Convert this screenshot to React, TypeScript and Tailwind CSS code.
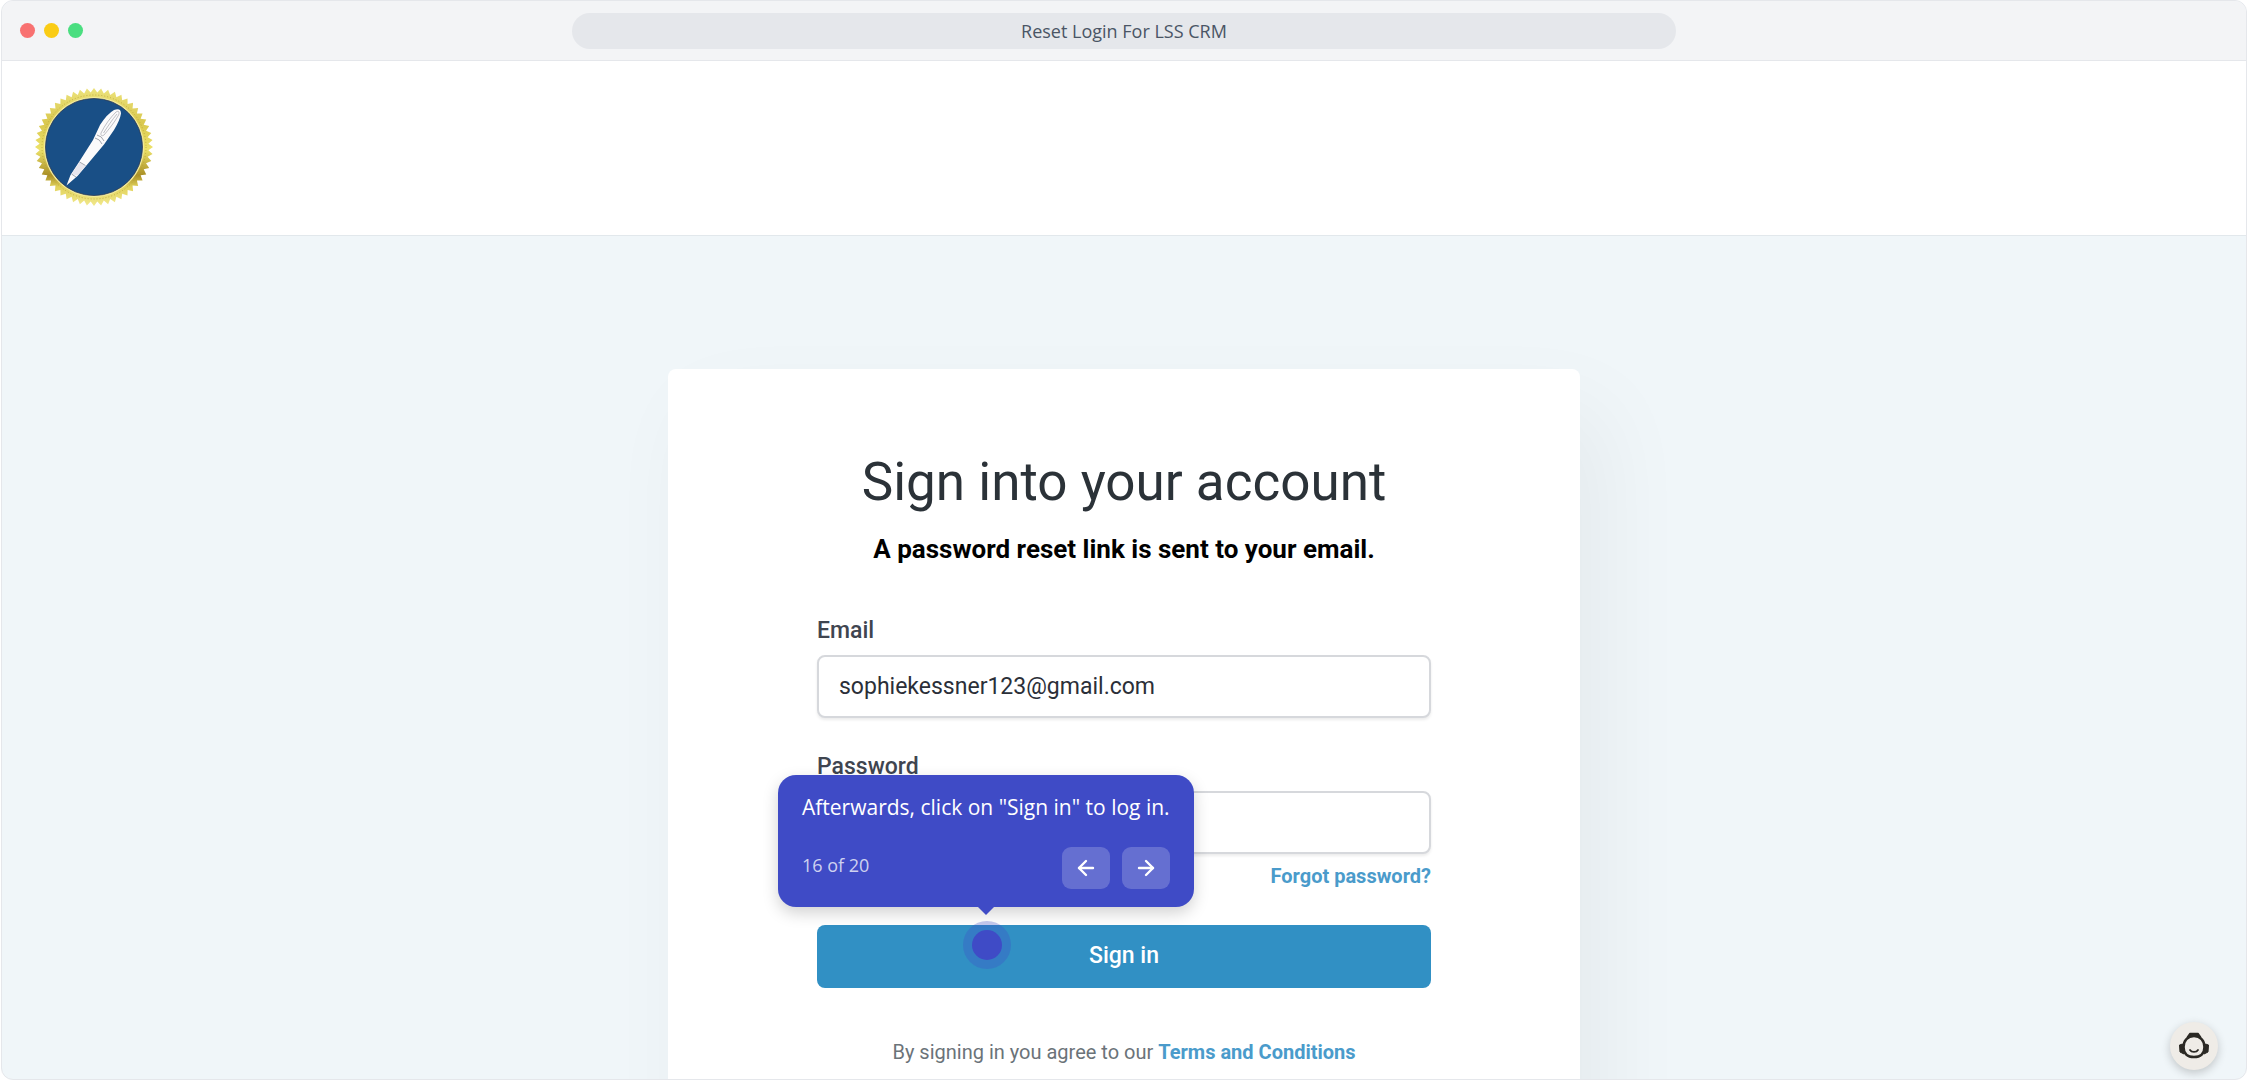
import { useState } from 'react';
import { ArrowLeft, ArrowRight } from 'lucide-react';

const TEETH = 52;

function sealPoints() {
  const points: string[] = [];
  for (let i = 0; i < TEETH * 2; i++) {
    const r = i % 2 === 0 ? 59 : 54.5;
    const a = (Math.PI * i) / TEETH - Math.PI / 2;
    points.push(`${(60 + r * Math.cos(a)).toFixed(2)},${(60 + r * Math.sin(a)).toFixed(2)}`);
  }
  return points.join(' ');
}

function SealLogo() {
  return (
    <svg viewBox="0 0 120 120" className="size-[120px]" role="img" aria-label="LSS">
      <defs>
        <linearGradient id="gold" x1="0" y1="0" x2="0" y2="1">
          <stop offset="0" stopColor="#ece27a" />
          <stop offset="0.3" stopColor="#d9c84f" />
          <stop offset="0.52" stopColor="#ede26a" />
          <stop offset="0.74" stopColor="#a98f26" />
          <stop offset="0.84" stopColor="#e2d35c" />
          <stop offset="1" stopColor="#f1e88c" />
        </linearGradient>
      </defs>
      <polygon points={sealPoints()} fill="url(#gold)" />
      <circle cx="60" cy="60" r="52" fill="none" stroke="#b49c35" strokeWidth="1" strokeDasharray="1 2" opacity="0.7" />
      <circle cx="60" cy="60" r="50" fill="#f2eb9c" />
      <circle cx="60" cy="60" r="48.5" fill="#194f86" stroke="#2c3a55" strokeWidth="0.8" />
      <path
        d="M32.5 98.5 L36.5 88 L45 75 L59 53 L66 38 Q73 27 80 23 Q87 20.500 87 26.500 Q86 33 80 43 L70 57.500 L52 79 L43.500 89 Z"
        fill="#fbfafb"
      />
      <path d="M45.5 75.5 L51.5 79 L43.5 88.5 L37.5 87 Z" fill="#e7e5ec" />
      <path
        d="M37.5 87 L42 90 M45.5 75 L51.5 78.5 M61 51 Q66 52 68 57 M63 48 Q68 49 70 54"
        stroke="#8d8f98"
        strokeWidth="0.8"
        fill="none"
      />
      <path
        d="M67 46 C71 38 76 31 82 25 C85 23 86 26 84 29 C80 36 75 42 70 48 C68 49.5 66.5 48.5 67 46 Z M69.5 46 C74 39 78 33 83 27"
        stroke="#96979f"
        strokeWidth="0.6"
        fill="none"
      />
    </svg>
  );
}

function TitleBar() {
  return (
    <div className="flex h-15 shrink-0 items-center border-b border-gray-200 bg-gray-100 px-[18px]">
      <div className="flex flex-1 gap-[9px]">
        <span className="size-[15px] rounded-full bg-[#f87171]" />
        <span className="size-[15px] rounded-full bg-[#facc15]" />
        <span className="size-[15px] rounded-full bg-[#4ade80]" />
      </div>
      <div className="flex h-9 w-1/2 items-center justify-center rounded-full bg-gray-200 text-lg text-gray-600">
        Reset Login For LSS CRM
      </div>
      <div className="flex-1" />
    </div>
  );
}

function StepTooltip() {
  return (
    <div
      role="dialog"
      aria-label="Step 16"
      className="absolute bottom-[81px] -left-[39px] w-[416px] rounded-[18px] bg-[#3f4bc6] px-6 pt-4 pb-[18px] font-['Open_Sans',sans-serif] shadow-[0_6px_16px_rgba(0,0,0,0.18)]"
    >
      <p className="text-[21px] leading-8 whitespace-nowrap text-white">
        Afterwards, click on "Sign in" to log in.
      </p>
      <div className="mt-6 flex items-start justify-between">
        <span className="text-lg leading-9 text-white/75">16 of 20</span>
        <div className="flex gap-3">
          <button
            type="button"
            aria-label="Previous step"
            className="flex h-[42px] w-12 items-center justify-center rounded-[9px] bg-white/20 text-white"
          >
            <ArrowLeft className="size-6" strokeWidth={2.4} />
          </button>
          <button
            type="button"
            aria-label="Next step"
            className="flex h-[42px] w-12 items-center justify-center rounded-[9px] bg-white/20 text-white"
          >
            <ArrowRight className="size-6" strokeWidth={2.4} />
          </button>
        </div>
      </div>
      <span className="absolute top-full left-1/2 -translate-x-1/2 border-x-8 border-t-8 border-x-transparent border-t-[#3f4bc6]" />
    </div>
  );
}

function Hotspot() {
  return (
    <span className="absolute -top-1 left-[146px] flex size-12 items-center justify-center rounded-full bg-[#3f4bc6]/30">
      <span className="size-[30px] rounded-full bg-[#3f4bc6]" />
    </span>
  );
}

function ChatButton() {
  return (
    <button
      type="button"
      aria-label="Open chat"
      className="absolute right-7 bottom-[9px] flex size-12 items-center justify-center rounded-full bg-[#efece7] shadow-[0_3px_10px_rgba(0,0,0,0.2)]"
    >
      <svg viewBox="0 0 32 28" className="h-7 w-8" fill="none">
        <path d="M9.5 5 L12 1.5 H20 L22.5 5 Z" fill="#2b2924" stroke="#2b2924" strokeWidth="1.5" strokeLinejoin="round" />
        <path d="M4.5 12 L1.5 13 L2 20 L6 22 Z M27.5 12 L30.5 13 L30 20 L26 22 Z" fill="#2b2924" stroke="#2b2924" strokeWidth="1" strokeLinejoin="round" />
        <path
          d="M16 4 C9.5 4 5.5 9 5.5 15 C5.5 21.5 9.5 25 16 25 C22.5 25 26.5 21.5 26.5 15 C26.5 9 22.5 4 16 4 Z"
          stroke="#2b2924"
          strokeWidth="2.6"
          fill="#efece7"
        />
        <path d="M12 18 C13.5 20.6 18.5 20.6 20 18" stroke="#2b2924" strokeWidth="1.8" strokeLinecap="round" />
      </svg>
    </button>
  );
}

const labelClass = 'block text-[23px] leading-8 font-medium text-[#3f4550]';
const inputClass =
  'mt-2 block h-[63px] w-full rounded-lg border-2 border-[#d6d8dc] bg-white px-5 text-[23px] text-[#2b2f38] shadow-[0_2px_3px_rgba(0,0,0,0.08)] outline-none';

export default function App() {
  const [email, setEmail] = useState('sophiekessner123@gmail.com');
  const [password, setPassword] = useState('');

  return (
    <div className="h-screen bg-white px-px font-['Open_Sans',sans-serif]">
      <div className="relative flex h-full flex-col overflow-hidden rounded-xl border border-gray-200 bg-[#f0f6f9]">
        <TitleBar />
        <header className="flex h-[175px] shrink-0 items-start border-b border-[#e2e8ec] bg-white px-8 pt-[26px]">
          <SealLogo />
        </header>

        <main className="flex min-h-0 flex-1 justify-center overflow-hidden pt-[133px] font-[Roboto,sans-serif]">
          <section className="h-fit w-[912px] shrink-0 rounded-lg bg-white px-[149px] py-20 shadow-[24px_40px_90px_rgba(0,0,0,0.05)]">
            <h1 className="text-center text-[53px] leading-[66px] text-[#2b3238]">Sign into your account</h1>
            <p className="mt-4 text-center text-[26px] leading-9 font-bold text-black">
              A password reset link is sent to your email.
            </p>

            <form className="mt-12" onSubmit={(e) => e.preventDefault()}>
              <label htmlFor="email" className={labelClass}>
                Email
              </label>
              <input
                id="email"
                type="email"
                value={email}
                onChange={(e) => setEmail(e.target.value)}
                className={inputClass}
              />

              <div className="mt-[33px]">
                <label htmlFor="password" className={labelClass}>
                  Password
                </label>
                <input
                  id="password"
                  type="password"
                  value={password}
                  onChange={(e) => setPassword(e.target.value)}
                  className={inputClass}
                />
              </div>

              <div className="mt-1.5 text-right text-xl leading-8 font-bold text-[#4a9bcb]">
                <a href="#forgot">Forgot password?</a>
              </div>

              <div className="relative mt-[33px]">
                <button
                  type="submit"
                  className="block h-[63px] w-full rounded-lg bg-[#3190c4] text-[23px] font-medium text-white"
                >
                  Sign in
                </button>
                <Hotspot />
                <StepTooltip />
              </div>
            </form>

            <p className="mt-12 text-center text-xl leading-8 text-[#6b7379]">
              By signing in you agree to our{' '}
              <a href="#terms" className="font-bold text-[#4a9bcb]">
                Terms and Conditions
              </a>
            </p>
          </section>
        </main>

        <ChatButton />
      </div>
    </div>
  );
}
